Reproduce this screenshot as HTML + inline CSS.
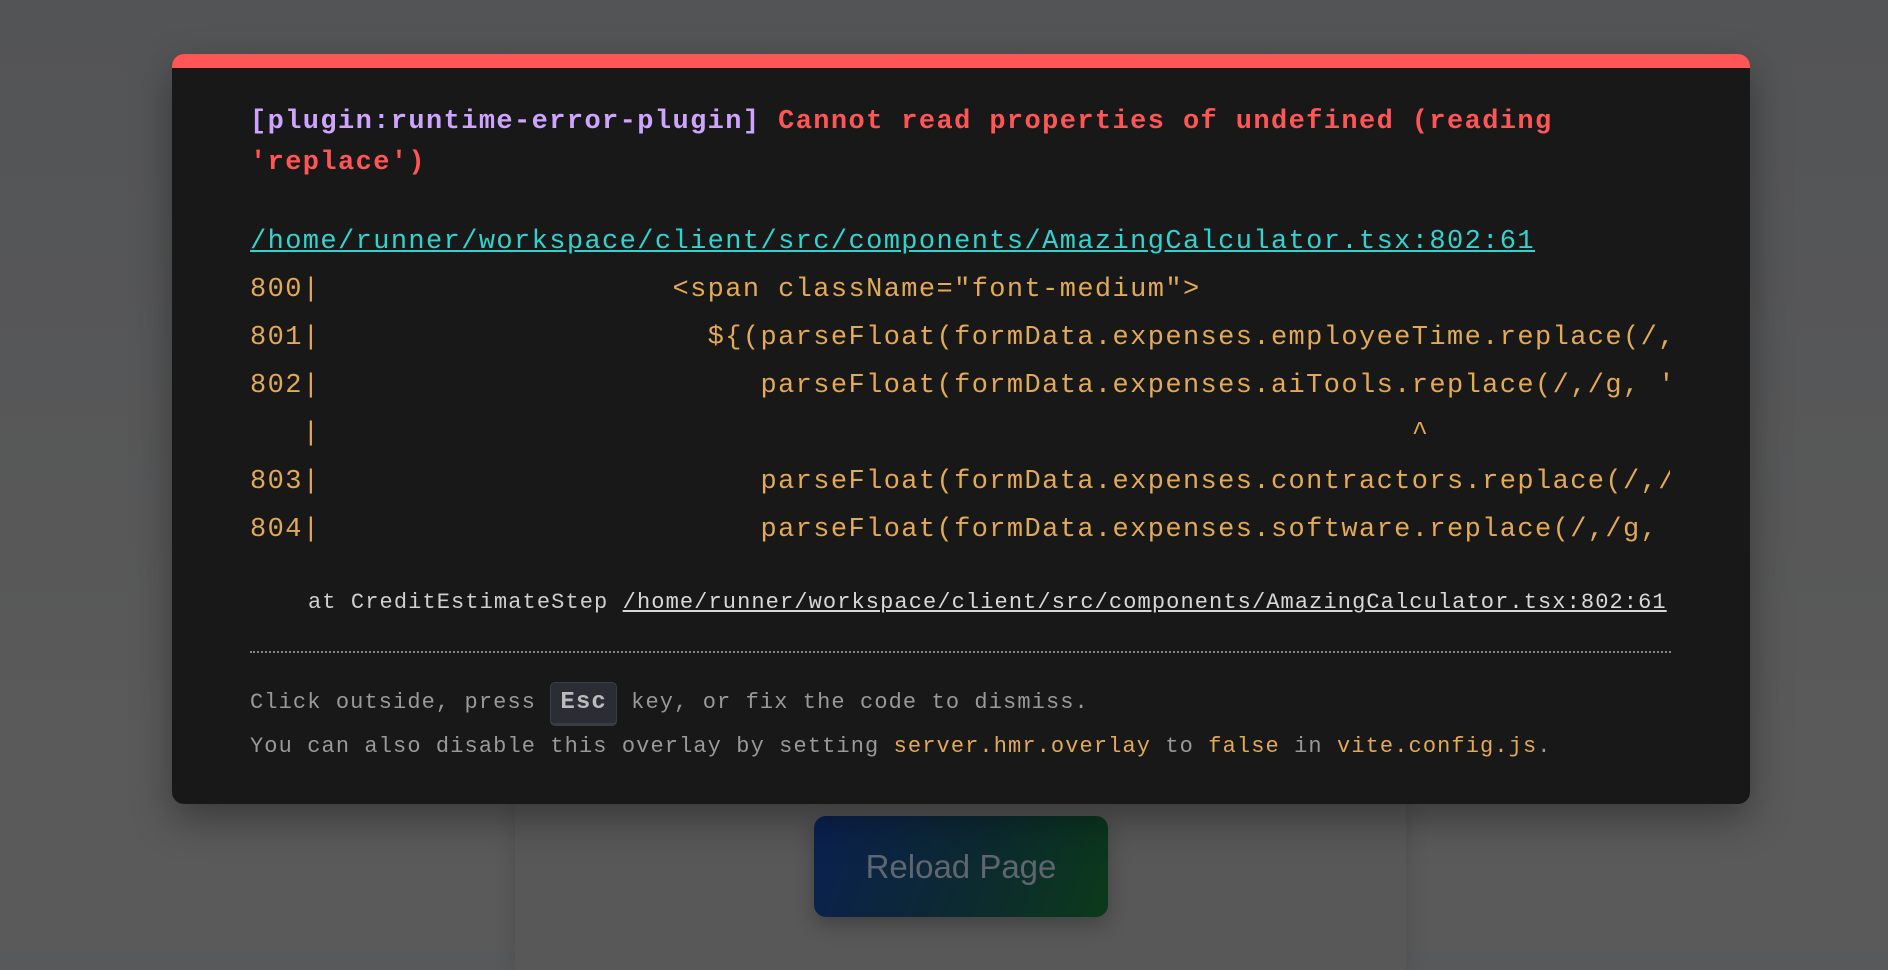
<!DOCTYPE html>
<html><head><meta charset="utf-8"><style>
html,body{margin:0;padding:0;}
body{width:1888px;height:952px;overflow:hidden;position:relative;background:#58595b;font-family:"Liberation Mono",monospace;}
.bgtop{position:absolute;left:0;top:0;width:1888px;height:952px;background:linear-gradient(#535456,#5a5a5a 80%);}
.card{position:absolute;left:515px;top:770px;width:891px;height:200px;background:#585858;box-shadow:0 0 20px rgba(0,0,0,.15);}
.btn{position:absolute;left:814px;top:816px;width:294px;height:101px;border-radius:12px;background:linear-gradient(110deg,#0b2150,#0c2a30 55%,#0c3a1a);box-shadow:0 8px 20px rgba(0,0,0,.25);color:#5f6670;font-family:"Liberation Sans",sans-serif;font-size:33px;text-align:center;line-height:101px;}
.box{position:absolute;left:172px;top:54px;width:1578px;height:750px;background:#181818;border-radius:12px;overflow:hidden;box-shadow:0 15px 40px rgba(0,0,0,.35);}
.bar{position:absolute;left:0;top:0;width:100%;height:14px;background:#ff5555;}
.t{position:absolute;left:78px;white-space:pre;font-size:27px;letter-spacing:1.4px;}
.title{top:48px;line-height:41px;font-weight:bold;color:#ff5555;}
.p{color:#cfa4ff;}
.link{top:164px;line-height:48px;color:#2ed4cf;text-decoration:underline;}
.code{top:212px;line-height:48px;color:#e2aa53;width:1420px;overflow:hidden;}
.sm{position:absolute;left:78px;white-space:pre;font-size:22px;letter-spacing:1.1px;line-height:30px;}
.at{top:534px;left:136px;color:#cfcfcf;}
.at u{color:#d8d8d8;}
.hr{position:absolute;left:78px;top:597px;width:1421px;border-top:2px dotted #888;}
.c1{top:628px;color:#999;}
.c2{top:678px;color:#999;}
.y{color:#e2aa53;}
kbd{display:inline-block;font-family:"Liberation Mono",monospace;font-size:24px;font-weight:bold;color:#bbb;background:#2a2d33;border:1px solid #3a3d44;border-bottom-width:3px;border-radius:5px;padding:4px 9px;line-height:32px;}
</style></head><body>
<div class="bgtop"></div>
<div class="card"></div>
<div class="btn">Reload Page</div>
<div class="box">
<div class="bar"></div>
<div class="t title"><span class="p">[plugin:runtime-error-plugin]</span> Cannot read properties of undefined (reading
'replace')</div>
<div class="t link">/home/runner/workspace/client/src/components/AmazingCalculator.tsx:802:61</div>
<div class="t code">800|                    &lt;span className="font-medium"&gt;
801|                      ${(parseFloat(formData.expenses.employeeTime.replace(/,/g, '')) +
802|                         parseFloat(formData.expenses.aiTools.replace(/,/g, '')) +
   |                                                              ^
803|                         parseFloat(formData.expenses.contractors.replace(/,/g, '')) +
804|                         parseFloat(formData.expenses.software.replace(/,/g, ''))</div>
<div class="sm at">at CreditEstimateStep <u>/home/runner/workspace/client/src/components/AmazingCalculator.tsx:802:61</u></div>
<div class="hr"></div>
<div class="sm c1">Click outside, press <kbd>Esc</kbd> key, or fix the code to dismiss.</div>
<div class="sm c2">You can also disable this overlay by setting <span class="y">server.hmr.overlay</span> to <span class="y">false</span> in <span class="y">vite.config.js</span>.</div>
</div>
</body></html>
